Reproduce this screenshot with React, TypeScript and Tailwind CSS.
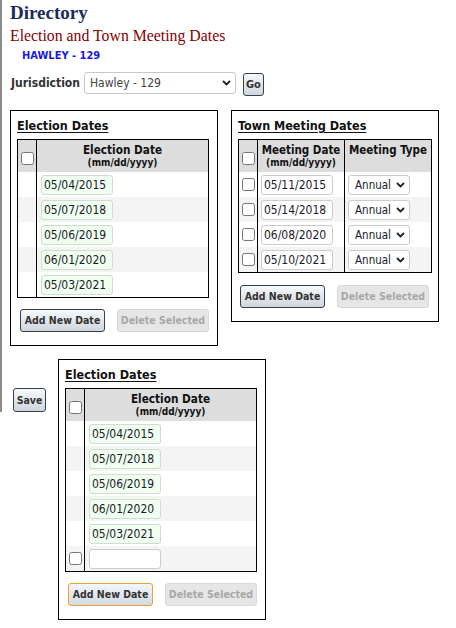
import React from "react";

const electionDates = ["05/04/2015", "05/07/2018", "05/06/2019", "06/01/2020", "05/03/2021"];
const meetingDates = ["05/11/2015", "05/14/2018", "06/08/2020", "05/10/2021"];

function Chevron({ className = "" }: { className?: string }) {
  return (
    <svg width="9" height="6" viewBox="0 0 9 6" className={className}>
      <path d="M1 1 L4.5 4.5 L8 1" fill="none" stroke="#222" strokeWidth="1.8" />
    </svg>
  );
}

function Btn({
  children,
  disabled,
  focus,
  className = "",
}: {
  children: React.ReactNode;
  disabled?: boolean;
  focus?: boolean;
  className?: string;
}) {
  const look = disabled
    ? "border-[#d8d8d8] bg-[#e6e6e6] text-[#a8a8a8]"
    : focus
    ? "border-[#f0a030] bg-gradient-to-b from-[#f3f6f9] to-[#d2dae3] text-[#333]"
    : "border-[#34404c] bg-gradient-to-b from-[#f7f8fa] to-[#cfd6dd] text-[#333]";
  return (
    <button
      disabled={disabled}
      className={`h-[23px] rounded-[3px] border p-0 text-[10.5px] font-bold leading-none ${look} ${className}`}
    >
      {children}
    </button>
  );
}

function DateBox({ value, green }: { value: string; green?: boolean }) {
  return (
    <input
      type="text"
      defaultValue={value}
      className={`h-[20px] w-[72px] rounded-[3px] border px-[2px] text-[12px] text-[#1b1b2b] outline-none ${
        green ? "border-[#cfdccf] bg-[#f0fff0]" : "border-[#cccccc] bg-white"
      }`}
    />
  );
}

function Check() {
  return <input type="checkbox" className="m-0 h-[13px] w-[13px]" />;
}

function ElectionBox({ withNew, className = "" }: { withNew?: boolean; className?: string }) {
  return (
    <div className={`w-[208px] border border-black px-[6px] pt-[7px] pb-[13px] ${className}`}>
      <div className="text-[12.5px] font-bold leading-[15px] text-[#111] underline underline-offset-2">
        Election Dates
      </div>
      <div className="mt-[6px] w-[192px] border border-black">
        <div className="flex h-[32px] bg-[#dddddd]">
          <div className="flex w-[19px] shrink-0 items-center justify-center border-r border-black pt-[4px]">
            <Check />
          </div>
          <div className="flex-1 pt-[3px] text-center font-bold text-[#111]">
            <div className="text-[11.7px] leading-[14px]">Election Date</div>
            <div className="text-[10px] leading-[12px]">(mm/dd/yyyy)</div>
          </div>
        </div>
        {electionDates.map((d, i) => (
          <div key={d} className={`flex h-[25px] ${i % 2 ? "bg-[#f4f4f4]" : "bg-white"}`}>
            <div className="w-[19px] shrink-0 border-r border-black" />
            <div className="flex items-center pl-[4px]">
              <DateBox value={d} green />
            </div>
          </div>
        ))}
        {withNew && (
          <div className="flex h-[25px] bg-[#f4f4f4]">
            <div className="flex w-[19px] shrink-0 items-center justify-center border-r border-black">
              <Check />
            </div>
            <div className="flex items-center pl-[4px]">
              <DateBox value="" />
            </div>
          </div>
        )}
      </div>
      <div className="mt-[11px] ml-[3px] flex gap-[12px]">
        <Btn focus={withNew} className="w-[85px]">
          Add New Date
        </Btn>
        <Btn disabled className="w-[92px]">
          Delete Selected
        </Btn>
      </div>
    </div>
  );
}

function MeetingBox() {
  return (
    <div className="w-[208px] border border-black px-[6px] pt-[7px] pb-[13px]">
      <div className="text-[12.5px] font-bold leading-[15px] text-[#111] underline underline-offset-2">
        Town Meeting Dates
      </div>
      <div className="mt-[6px] w-[194px] border border-black">
        <div className="flex h-[32px] bg-[#dddddd] font-bold text-[#111]">
          <div className="flex w-[19px] shrink-0 items-center justify-center border-r border-black pt-[4px]">
            <Check />
          </div>
          <div className="w-[87px] shrink-0 border-r border-black pt-[3px] text-center">
            <div className="text-[11.5px] leading-[14px]">Meeting Date</div>
            <div className="text-[10px] leading-[12px]">(mm/dd/yyyy)</div>
          </div>
          <div className="flex-1 pt-[3px] text-center text-[11.5px] leading-[14px]">Meeting Type</div>
        </div>
        {meetingDates.map((d, i) => (
          <div key={d} className={`flex h-[25px] ${i % 2 ? "bg-[#f4f4f4]" : "bg-white"}`}>
            <div className="flex w-[19px] shrink-0 items-center justify-center border-r border-black">
              <Check />
            </div>
            <div className="flex w-[87px] shrink-0 items-center border-r border-black pl-[3px]">
              <DateBox value={d} />
            </div>
            <div className="flex flex-1 items-center pl-[3px]">
              <div className="flex h-[20px] w-[62px] items-center justify-between rounded-[3px] border border-[#cccccc] bg-white pl-[6px] pr-[4px] text-[11.5px] leading-[14px] text-[#1b1b2b]">
                <span className="pt-[1px] leading-[14px]">Annual</span>
                <Chevron />
              </div>
            </div>
          </div>
        ))}
      </div>
      <div className="mt-[12px] ml-[2px] flex gap-[12px]">
        <Btn className="w-[85px]">Add New Date</Btn>
        <Btn disabled className="w-[92px]">
          Delete Selected
        </Btn>
      </div>
    </div>
  );
}

export default function App() {
  return (
    <div className="flex min-h-[628px] items-start bg-white font-['DejaVu_Sans_Condensed','DejaVu_Sans',sans-serif] [font-stretch:condensed]">
      <div className="h-[412px] w-[2px] shrink-0 bg-[#8c8c8c]" />
      <div className="pl-[8px]">
        <h1 className="mt-[2px] font-['Liberation_Serif','Times_New_Roman',serif] text-[19px] font-bold leading-[22px] text-[#1c2b5c] [font-stretch:normal]">
          Directory
        </h1>
        <div className="mt-[2px] font-['Liberation_Serif','Times_New_Roman',serif] text-[15.8px] leading-[20px] text-[#860000] [font-stretch:normal]">
          Election and Town Meeting Dates
        </div>
        <div className="mt-[3px] pl-[12px] text-[11px] font-bold leading-[14px] text-[#1a1ae0]">HAWLEY - 129</div>
        <div className="mt-[9px] flex items-start">
          <label className="mt-[4px] ml-[1px] text-[12px] font-bold leading-[14px] text-[#333]">Jurisdiction</label>
          <div className="ml-[4px] flex h-[22px] w-[152px] items-center justify-between rounded-[3px] border border-[#c8c8c8] bg-white pl-[5px] pr-[4px] text-[12px] text-[#444]">
            <span>Hawley - 129</span>
            <Chevron />
          </div>
          <Btn className="ml-[7px] mt-[1px] h-[22px] w-[21px] text-[11px]">Go</Btn>
        </div>
        <div className="mt-[14px] flex items-start gap-[13px]">
          <ElectionBox />
          <MeetingBox />
        </div>
        <div className="mt-[13px] flex items-start">
          <Btn className="ml-[3px] mt-[29px] h-[24px] w-[33px]">Save</Btn>
          <ElectionBox withNew className="ml-[12px]" />
        </div>
      </div>
    </div>
  );
}
